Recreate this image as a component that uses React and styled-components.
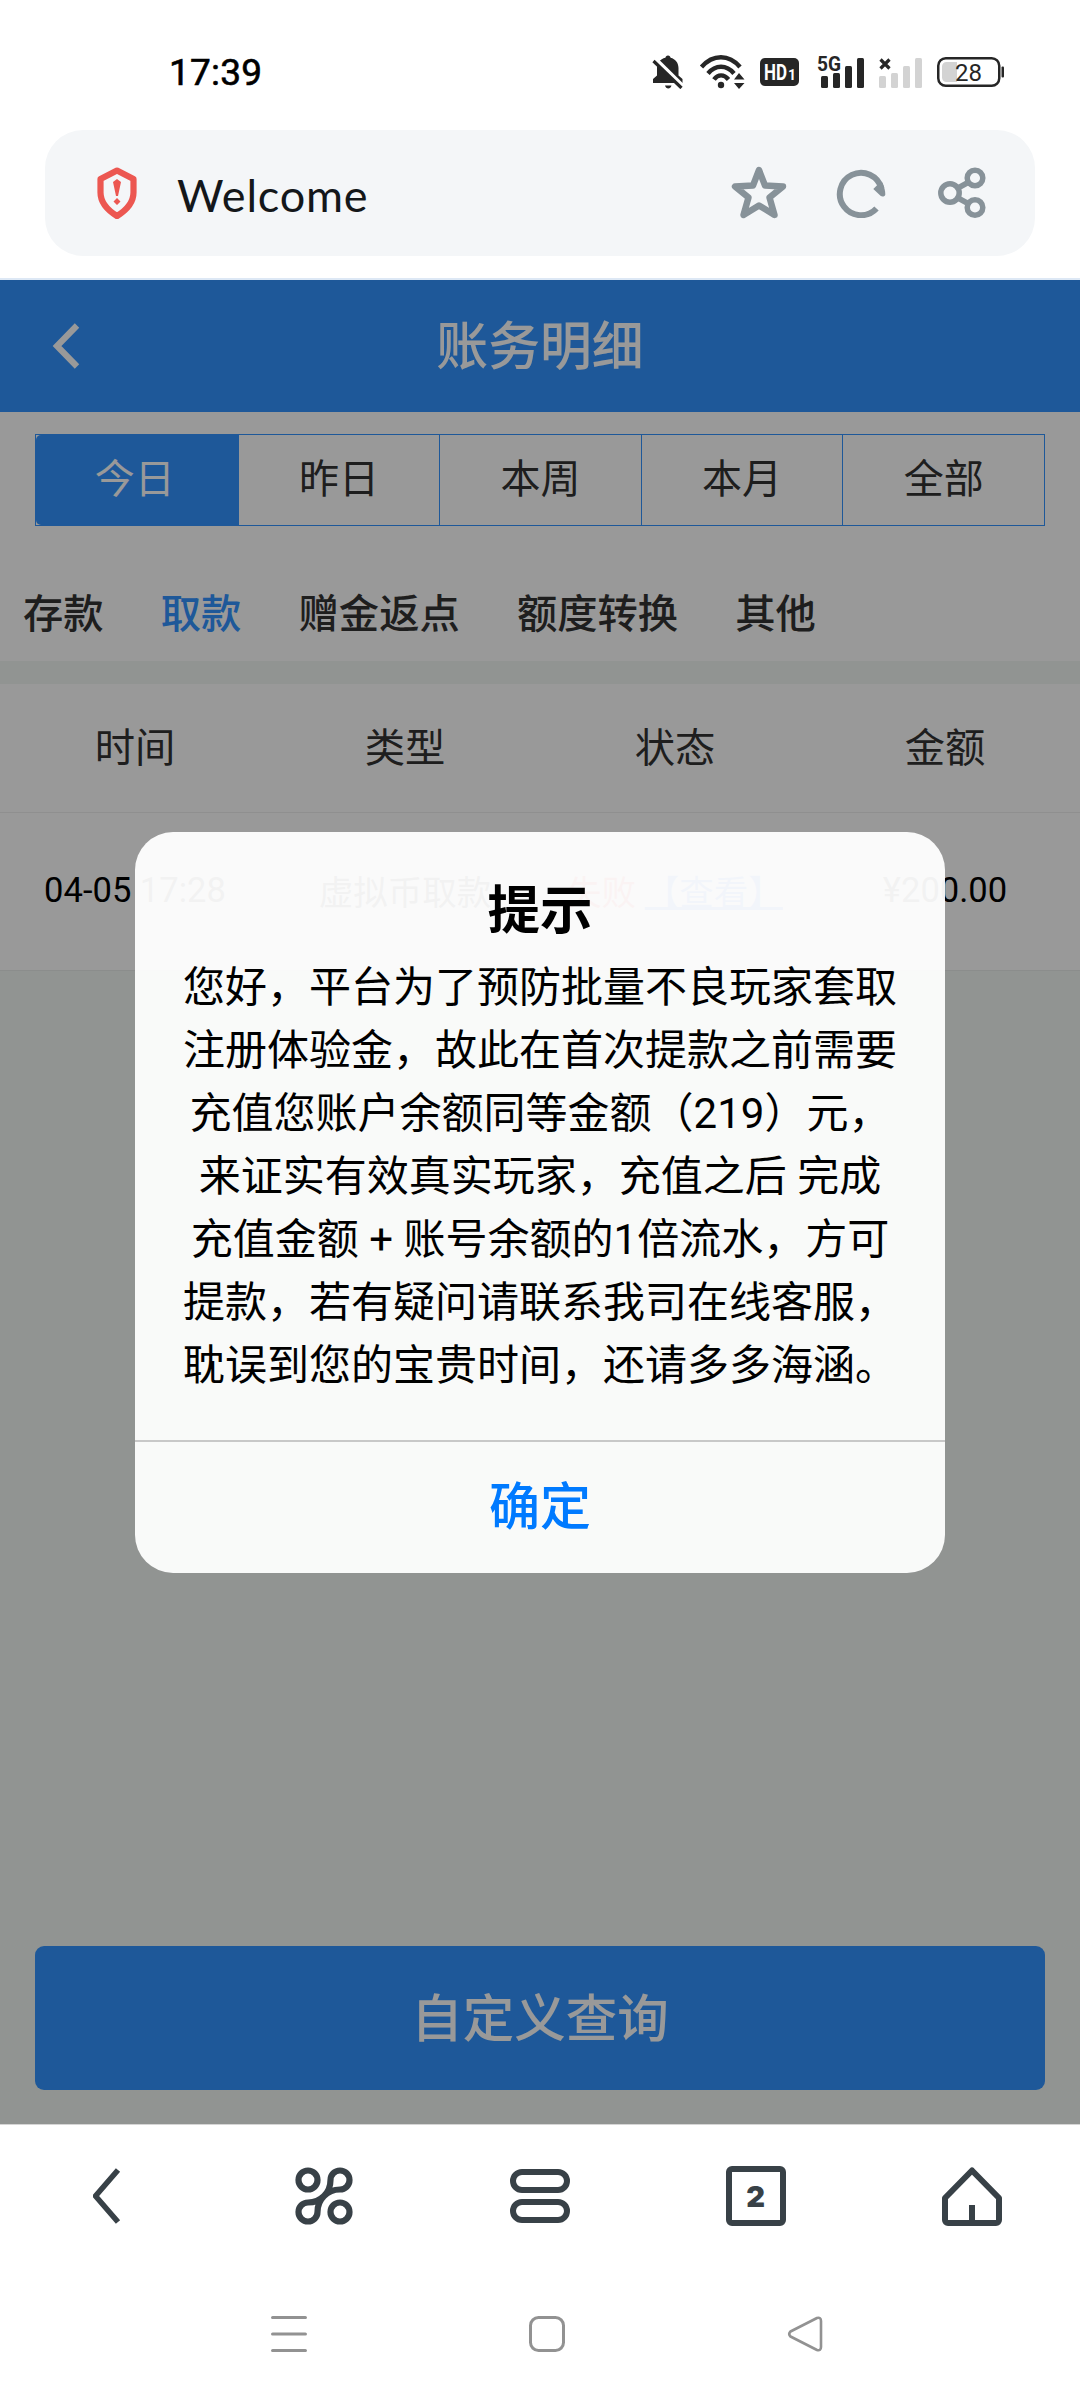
import React, { useState } from 'react'
import styled, { createGlobalStyle } from "styled-components";

const ranges = ["今日", "昨日", "本周", "本月", "全部"];
const categories = ["存款", "取款", "赠金返点", "额度转换", "其他"];
const columns = ["时间", "类型", "状态", "金额"];

const message = [
  "您好，平台为了预防批量不良玩家套取",
  "注册体验金，故此在首次提款之前需要",
  "充值您账户余额同等金额（219）元，",
  "来证实有效真实玩家，充值之后 完成",
  "充值金额 + 账号余额的1倍流水，方可",
  "提款，若有疑问请联系我司在线客服，",
  "耽误到您的宝贵时间，还请多多海涵。",
];

function StatusIcons() {
  return (
    <StatusRow>
      <Icon width="32" height="34" viewBox="0 0 32 34" $color="#262626">
        <path fill="currentColor" d="M16 0.5c1.6 0 2.4 1 2.6 2.3C23.500 4 26.500 8 26.500 13v7.500l4 3.500v4H1v-4l4-3.500V13c0-5 3-9 8.400-10.200C13.600 1.500 14.400 .5 16 .5zM13 30.500h6.500c-.5 2-1.700 3-3.200 3S13.500 32.500 13 30.500z" />
        <path d="M3 3.500L32 32" stroke="#fff" strokeWidth="4" />
        <path d="M1.500 6L29.500 33" stroke="currentColor" strokeWidth="3.200" />
      </Icon>
      <Icon width="46" height="34" viewBox="0 0 46 34" $left={15} $color="#262626">
        <g fill="none" stroke="currentColor" strokeWidth="4.400">
          <path d="M2.500 12C14 -1 30 -1 41 12" />
          <path d="M9 18.500C16.500 9.500 27.500 9.500 35 18.500" />
          <path d="M15 24.500C19 19 25 19 29.500 24.500" />
        </g>
        <circle cx="22" cy="30" r="3.200" fill="currentColor" />
        <path d="M35 24.500l5-6.500 5.500 6.500zM35 28h10.500L40 34z" fill="currentColor" />
      </Icon>
      <Icon width="39" height="28" viewBox="0 0 39 28" $left={15} $color="#262626">
        <rect width="39" height="28" rx="5" fill="currentColor" />
        <text x="4" y="22" fill="#fff" fontFamily="Roboto, sans-serif" fontWeight="700" fontSize="22" textLength="23" lengthAdjust="spacingAndGlyphs">HD</text>
        <text x="28" y="22" fill="#fff" fontFamily="Roboto, sans-serif" fontWeight="700" fontSize="14">1</text>
      </Icon>
      <Icon width="48" height="46" viewBox="0 -6 48 46" $left={18} $color="#262626">
        <text x="0" y="16" fill="currentColor" fontFamily="Roboto, sans-serif" fontWeight="700" fontSize="20" textLength="24" lengthAdjust="spacingAndGlyphs">5G</text>
        <g fill="currentColor">
          <rect x="4" y="21" width="7" height="12" rx="1.500" />
          <rect x="16" y="18" width="7" height="15" rx="1.500" />
          <rect x="28" y="11" width="7" height="22" rx="1.500" />
          <rect x="40" y="3" width="7" height="30" rx="1.500" />
        </g>
      </Icon>
      <Icon width="45" height="34" viewBox="0 0 45 34" $left={13} $color="#d3d3d3">
        <path d="M2.500 4.500l9 9M11.500 4.500l-9 9" stroke="#262626" strokeWidth="3.200" />
        <g fill="currentColor">
          <rect x="1" y="21" width="7" height="12" rx="1.500" />
          <rect x="13" y="18" width="7" height="15" rx="1.500" />
          <rect x="25" y="11" width="7" height="22" rx="1.500" />
          <rect x="37" y="3" width="7" height="30" rx="1.500" />
        </g>
      </Icon>
      <Icon width="68" height="30" viewBox="0 0 68 30" $left={14} $color="#262626">
        <rect x="1.250" y="1.250" width="61" height="27.500" rx="7.500" fill="none" stroke="currentColor" strokeWidth="2.500" />
        <path d="M20 5v20H9.500a4.500 4.500 0 0 1-4.500-4.500v-11A4.500 4.500 0 0 1 9.500 5z" fill="#d3d3d3" />
        <rect x="64.500" y="9.500" width="2.500" height="11" rx="1" fill="currentColor" />
        <text x="18" y="23.500" fill="currentColor" fontFamily="Roboto, sans-serif" fontSize="24">28</text>
      </Icon>
    </StatusRow>
  );
}

export default function App() {
  const [range, setRange] = useState(0);
  const [category, setCategory] = useState(1);
  const [showTip, setShowTip] = useState(true);

  return (
    <Phone>
      <GlobalStyle />
      <StatusBar>
        <Clock>17:39</Clock>
        <StatusIcons />
      </StatusBar>

      <AddressBar>
        <Icon width="40" height="52" viewBox="0 0 40 52" $color="#ec5751">
          <path d="M20 3.500L36.500 12v13.500c0 9.500-6 17-16.500 23.500C9.500 42.500 3.500 35 3.500 25.500V12z" fill="none" stroke="currentColor" strokeWidth="6.200" strokeLinejoin="round" />
          <path d="M20 12l4 3-3 14h-2l-3-14zM20 31l3.500 3.500L20 38l-3.500-3.500z" fill="currentColor" />
        </Icon>
        <SiteTitle>Welcome</SiteTitle>
        <Icon width="58" height="56" viewBox="0 0 58 56" $color="#879299">
          <path d="M29 5l6 15.500 18 1L39.500 32.500 44.500 50 29 40.500 13.500 50l5-17.500L5 21.500l18-1z" fill="none" stroke="currentColor" strokeWidth="6.400" strokeLinejoin="round" />
        </Icon>
        <Icon width="50" height="50" viewBox="0 0 50 50" $left={48} $color="#879299">
          <path d="M40.500 40.500A21.200 21.200 0 1 1 45.500 20.500" fill="none" stroke="currentColor" strokeWidth="6" />
          <path d="M46 14.500C48.500 19 49.300 23 49.300 26.500c-.3 2.200-3.300 2.600-4.800 1.200L37.300 21l4-4z" fill="currentColor" />
        </Icon>
        <Icon width="50" height="54" viewBox="0 0 50 54" $left={51} $color="#879299">
          <g fill="none" stroke="currentColor" strokeWidth="5.500">
            <circle cx="13" cy="27" r="9.200" />
            <circle cx="38" cy="12" r="7.800" />
            <circle cx="38" cy="41.500" r="7.800" />
            <path d="M21 22l10-5.500M21 32l10 5.500" />
          </g>
        </Icon>
      </AddressBar>

      <WebView>
        <Header>
          <Icon width="28" height="46" viewBox="0 0 28 46" $color="#fff">
            <path d="M25 2.500L5 23l20 20.500" fill="none" stroke="currentColor" strokeWidth="6.200" />
          </Icon>
          <HeaderTitle>账务明细</HeaderTitle>
        </Header>

        <Filters>
          <RangeTabs>
            {ranges.map((item, i) => (
              <RangeTab key={item} $active={range === i} onClick={() => setRange(i)}>
                {item}
              </RangeTab>
            ))}
          </RangeTabs>
          <CategoryTabs>
            {categories.map((item, i) => (
              <CategoryTab key={item} $active={category === i} onClick={() => setCategory(i)}>
                {item}
              </CategoryTab>
            ))}
          </CategoryTabs>
        </Filters>

        <TableHead>
          {columns.map((item) => (
            <span key={item}>{item}</span>
          ))}
        </TableHead>
        <TableRow>
          <span>04-05 17:28</span>
          <span>虚拟币取款</span>
          <Failed>
            失败 <ViewLink>【查看】</ViewLink>
          </Failed>
          <span>¥200.00</span>
        </TableRow>

        <QueryButton>自定义查询</QueryButton>

        {showTip && (
          <Mask>
            <Dialog>
              <DialogTitle>提示</DialogTitle>
              <DialogText>
                {message.map((line) => (
                  <span key={line}>{line}</span>
                ))}
              </DialogText>
              <DialogButton onClick={() => setShowTip(false)}>确定</DialogButton>
            </Dialog>
          </Mask>
        )}
      </WebView>

      <BrowserBar>
        <Icon width="30" height="60" viewBox="0 0 30 60" $color="#384147">
          <path d="M25 4L2.500 30L25 56" fill="none" stroke="currentColor" strokeWidth="5.600" strokeLinejoin="round" />
        </Icon>
        <Icon width="60" height="60" viewBox="0 0 60 60" $color="#384147">
          <g fill="none" stroke="currentColor" strokeWidth="6.200" strokeLinejoin="round">
            <circle cx="14" cy="14" r="9.500" />
            <circle cx="46" cy="46" r="9.500" />
            <path d="M30 30C35 25 39 23.500 46 23.500A9.500 9.500 0 1 0 36.500 14C36.500 21 35 25 30 30C25 35 23.500 39 23.500 46A9.500 9.500 0 1 1 14 36.500C21 36.500 25 35 30 30z" />
          </g>
        </Icon>
        <Icon width="60" height="60" viewBox="0 0 60 60" $color="#384147">
          <g fill="none" stroke="currentColor" strokeWidth="6">
            <rect x="3" y="6" width="54" height="18" rx="9" />
            <rect x="3" y="36" width="54" height="18" rx="9" />
          </g>
        </Icon>
        <TabCount>2</TabCount>
        <Icon width="60" height="60" viewBox="0 0 60 60" $color="#384147">
          <path d="M30 4.500L57 32v22a3 3 0 0 1-3 3H6a3 3 0 0 1-3-3V32z" fill="none" stroke="currentColor" strokeWidth="6" strokeLinejoin="round" />
          <path d="M30 39v18" stroke="currentColor" strokeWidth="6" />
        </Icon>
      </BrowserBar>

      <SystemNav>
        <Icon width="36" height="38" viewBox="0 0 36 38" $color="#929292">
          <path d="M1.600 2.500h32.800M1.600 19h32.800M1.600 35.500h32.800" stroke="currentColor" strokeWidth="3.200" strokeLinecap="round" />
        </Icon>
        <Icon width="38" height="38" viewBox="0 0 38 38" $color="#929292">
          <rect x="2.500" y="2.500" width="33" height="33" rx="8" fill="none" stroke="currentColor" strokeWidth="3" />
        </Icon>
        <Icon width="36" height="38" viewBox="0 0 36 38" $color="#929292">
          <path d="M30 3L3.500 16.500Q1 19 3.500 21.500L30 35Q34 36 34 32V6Q34 2 30 3z" fill="none" stroke="currentColor" strokeWidth="2.600" strokeLinejoin="round" />
        </Icon>
      </SystemNav>
    </Phone>
  );
}

const GlobalStyle = createGlobalStyle`
  * {
    box-sizing: border-box;
  }

  body {
    margin: 0;
    background: #fff;
    font-family: Roboto, "Noto Sans CJK SC", sans-serif;
  }

  button {
    font-family: inherit;
    border: none;
    padding: 0;
    cursor: pointer;
  }
`;

const Phone = styled.div`
  display: flex;
  flex-direction: column;
  width: 1080px;
  height: 2400px;
  overflow: hidden;
  background: #fff;
`;

const Icon = styled.svg`
  display: block;
  flex: none;
  margin-left: ${(props) => props.$left || 0}px;
  color: ${(props) => props.$color};
`;

const StatusBar = styled.div`
  display: flex;
  align-items: center;
  justify-content: space-between;
  height: 130px;
  padding: 14px 75px 0 169px;
`;

const Clock = styled.span`
  font-size: 37px;
  line-height: 44px;
  margin-top: 2px;
  letter-spacing: 0.2px;
  -webkit-text-stroke: 0.6px #000;
`;

const StatusRow = styled.div`
  display: flex;
  align-items: center;
`;

const AddressBar = styled.div`
  display: flex;
  align-items: center;
  flex: none;
  height: 126px;
  margin: 0 45px 22px;
  padding: 0 48px 1px 52px;
  border-radius: 38px;
  background: #f4f6f8;
`;

const SiteTitle = styled.span`
  flex: 1;
  margin: 5px 0 0 40px;
  font-family: Lato, sans-serif;
  font-size: 45px;
  letter-spacing: 0.8px;
  color: #14171a;
`;

const WebView = styled.div`
  position: relative;
  display: flex;
  flex-direction: column;
  flex: none;
  height: 1847px;
  border-top: 2px solid #dde8f5;
  border-bottom: 1px solid #d5d5d5;
  background: #f2f7f4;
`;

const Header = styled.div`
  display: grid;
  grid-template-columns: 80px 1fr 80px;
  align-items: center;
  height: 132px;
  background: #3293ff;

  svg {
    margin-left: 52px;
  }
`;

const HeaderTitle = styled.h1`
  margin: 4px 0 0;
  font-size: 51.84px;
  font-weight: 500;
  line-height: 60px;
  text-align: center;
  color: #fff;
`;

const Filters = styled.div`
  height: 249px;
  padding-top: 22px;
  background: #fff;
`;

const RangeTabs = styled.div`
  display: grid;
  grid-template-columns: repeat(5, 1fr);
  height: 92px;
  margin: 0 35px;
  border: 1px solid #3293ff;
`;

const RangeTab = styled.button`
  padding-bottom: 8px;
  font-size: 40px;
  color: ${(props) => (props.$active ? "#fff" : "#333")};
  background: ${(props) => (props.$active ? "#3293ff" : "none")};

  &:first-child {
    padding-right: 4px;
    border-radius: 5px 0 0 5px;
  }

  & + & {
    border-left: 1px solid #3293ff;
  }
`;

const CategoryTabs = styled.div`
  display: flex;
  gap: 57.2px;
  padding: 59px 23px 0;
`;

const CategoryTab = styled.button`
  font-size: 40.3px;
  font-weight: 500;
  line-height: 60px;
  background: none;
  color: ${(props) => (props.$active ? "#3293ff" : "#333")};
`;

const TableHead = styled.div`
  display: grid;
  grid-template-columns: repeat(4, 270px);
  align-items: center;
  height: 129px;
  margin-top: 23px;
  padding-bottom: 7px;
  border-bottom: 1px solid #eee;
  background: #fff;
  font-size: 40.3px;
  text-align: center;
  color: #333;
`;

const TableRow = styled.div`
  display: grid;
  grid-template-columns: repeat(4, 270px);
  align-items: center;
  height: 158px;
  padding-bottom: 3px;
  border-bottom: 1px solid #e8ebea;
  background: #fff;
  font-size: 34.56px;
  text-align: center;
  color: #000;
`;

const Failed = styled.span`
  color: #ff2a2a;
`;

const ViewLink = styled.a`
  color: #1a6dff;
  text-decoration: underline;
`;

const QueryButton = styled.button`
  height: 144px;
  margin: auto 35px 34px;
  padding-bottom: 7px;
  border-radius: 9px;
  background: #3293ff;
  font-size: 51.5px;
  font-weight: 500;
  color: #fff;
`;

const Mask = styled.div`
  position: absolute;
  inset: 0;
  display: flex;
  align-items: center;
  justify-content: center;
  background: rgba(0, 0, 0, 0.4);
`;

const Dialog = styled.div`
  width: 810px;
  height: 741px;
  display: flex;
  flex-direction: column;
  border-radius: 38px;
  overflow: hidden;
  background: rgba(255, 255, 255, 0.95);
  text-align: center;
  color: #000;
`;

const DialogTitle = styled.h2`
  margin: 46px 0 0;
  font-size: 52.5px;
  font-weight: 600;
  line-height: 66px;
`;

const DialogText = styled.p`
  flex: 1;
  margin: 12px 0 0;
  font-size: 42px;
  line-height: 63px;

  span {
    display: block;
    white-space: nowrap;
  }
`;

const DialogButton = styled.button`
  height: 133px;
  padding-bottom: 8px;
  border-top: 2px solid #c8c8c8;
  background: none;
  font-size: 51px;
  font-weight: 500;
  color: #007aff;
`;

const BrowserBar = styled.div`
  display: grid;
  grid-template-columns: repeat(5, 216px);
  align-items: center;
  justify-items: center;
  height: 142px;
`;

const TabCount = styled.div`
  display: flex;
  align-items: center;
  justify-content: center;
  width: 60px;
  height: 60px;
  padding-right: 1px;
  border: 6px solid #384147;
  border-radius: 6px;
  font-family: Inter, sans-serif;
  font-size: 29px;
  font-weight: 900;
  color: #384147;
`;

const SystemNav = styled.div`
  display: grid;
  grid-template-columns: repeat(3, 258px);
  align-items: center;
  justify-items: center;
  height: 133px;
  margin-left: 160px;
`;
